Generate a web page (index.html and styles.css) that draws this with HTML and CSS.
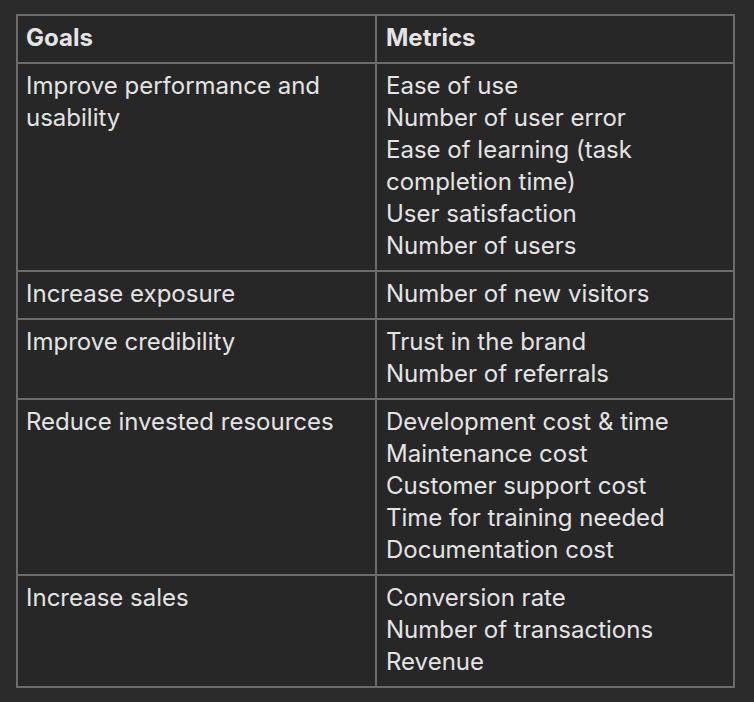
FILE: index.html
```html
<!DOCTYPE html>
<html lang="en">
<head>
<meta charset="utf-8">
<title>Goals and Metrics</title>
<link rel="stylesheet" href="styles.css">
</head>
<body>
<table class="gm-table">
  <colgroup><col class="col-goal"><col class="col-metric"></colgroup>
  <thead>
    <tr><th>Goals</th><th>Metrics</th></tr>
  </thead>
  <tbody>
    <tr>
      <td>Improve performance and usability</td>
      <td>Ease of use<br>Number of user error<br>Ease of learning (task<br>completion time)<br>User satisfaction<br>Number of users</td>
    </tr>
    <tr>
      <td>Increase exposure</td>
      <td>Number of new visitors</td>
    </tr>
    <tr>
      <td>Improve credibility</td>
      <td>Trust in the brand<br>Number of referrals</td>
    </tr>
    <tr>
      <td>Reduce invested resources</td>
      <td>Development cost &amp; time<br>Maintenance cost<br>Customer support cost<br>Time for training needed<br>Documentation cost</td>
    </tr>
    <tr>
      <td>Increase sales</td>
      <td>Conversion rate<br>Number of transactions<br>Revenue</td>
    </tr>
  </tbody>
</table>
</body>
</html>
```
FILE: styles.css
```css
html, body {
  margin: 0;
  padding: 0;
  background: #2a2a2a;
}
body {
  padding: 14px 0 0 16px;
  font-family: "Inter", "Noto Sans", sans-serif;
  color: #e4e4e4;
}
.gm-table {
  border-collapse: separate;
  border-spacing: 0;
  table-layout: fixed;
  width: 719px;
  border-top: 2px solid #6b6b6b;
  border-left: 2px solid #6b6b6b;
  background: #272727;
}
.col-goal { width: 359px; }
.col-metric { width: 358px; }
.gm-table th,
.gm-table td {
  border-right: 2px solid #6b6b6b;
  border-bottom: 2px solid #6b6b6b;
  padding: 6px 8px 8px 8px;
  font-size: 24px;
  line-height: 32px;
  text-align: left;
  vertical-align: top;
  font-weight: 400;
}
.gm-table th {
  font-weight: 700;
}
.gm-table td:last-child,
.gm-table th:last-child {
  padding-left: 9px;
}
```
